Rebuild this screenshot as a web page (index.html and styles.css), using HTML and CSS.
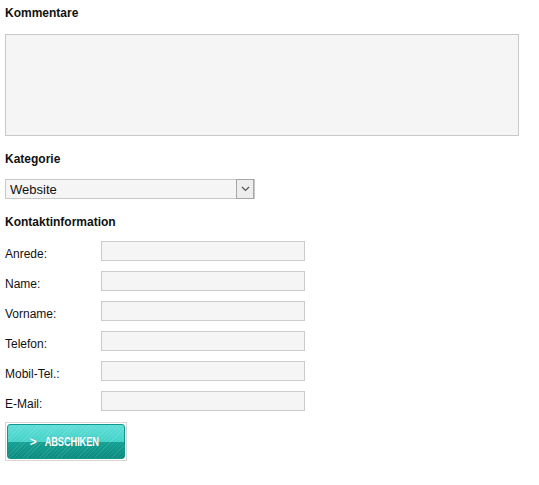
FILE: index.html
```html
<!DOCTYPE html>
<html lang="de">
<head>
  <meta charset="UTF-8">
  <title>Kontaktformular</title>
  <link rel="stylesheet" href="styles.css">
</head>
<body>

  <form class="contact-form">
    <h3>Kommentare</h3>
    <textarea class="comments"></textarea>

    <h3 class="section">Kategorie</h3>
    <div class="select-wrap">
      <select class="category">
        <option>Website</option>
        <option>Shop</option>
        <option>Sonstiges</option>
      </select>
      <span class="select-arrow">
        <svg width="9" height="6" viewBox="0 0 9 6"><path d="M1 1 L4.5 4.5 L8 1" fill="none" stroke="#555" stroke-width="1.2"/></svg>
      </span>
    </div>

    <h3 class="section">Kontaktinformation</h3>
    <div class="fields">
      <label>Anrede:</label><input type="text">
      <label>Name:</label><input type="text">
      <label>Vorname:</label><input type="text">
      <label>Telefon:</label><input type="text">
      <label>Mobil-Tel.:</label><input type="text">
      <label>E-Mail:</label><input type="text">
    </div>

    <div class="submit-box">
      <button type="submit"><span class="chev">&gt;</span><span class="label">ABSCHIKEN</span></button>
    </div>
  </form>

</body>
</html>
```

FILE: styles.css
```css
body {
  margin: 0;
  background: #fff;
  font-family: "Liberation Sans", Arial, sans-serif;
  font-size: 12px;
  color: #111;
}
.contact-form {
  padding: 6px 5px;
}
h3 {
  margin: 0;
  font-size: 12px;
  line-height: 14px;
  font-weight: bold;
  color: #111;
}
.section {
  margin-top: 16px;
}
.comments {
  display: block;
  box-sizing: border-box;
  width: 514px;
  height: 102px;
  margin: 14px 0 0;
  border: 1px solid #c9c9c9;
  background: #f5f5f5;
  resize: none;
  padding: 4px;
}
.select-wrap {
  position: relative;
  width: 250px;
  margin-top: 13px;
  margin-bottom: 14px;
}
.category {
  display: block;
  box-sizing: border-box;
  width: 250px;
  height: 20px;
  border: 1px solid #c9c9c9;
  background: #f5f5f5;
  font-family: "Liberation Sans", Arial, sans-serif;
  font-size: 13px;
  color: #111;
  padding: 0 4px;
  appearance: none;
  -webkit-appearance: none;
  border-radius: 0;
}
.select-arrow {
  position: absolute;
  right: 1px;
  top: 0;
  width: 16px;
  height: 18px;
  border: 1px solid #a6a6a6;
  background: #ededed;
  display: flex;
  align-items: center;
  justify-content: center;
  pointer-events: none;
}
.fields {
  display: grid;
  grid-template-columns: 96px 204px;
  row-gap: 10px;
  margin-top: 12px;
}
.fields label {
  line-height: 14px;
  padding-top: 6px;
  color: #111;
}
.fields input {
  box-sizing: border-box;
  height: 20px;
  width: 204px;
  margin: 0;
  border: 1px solid #cbcbcb;
  background: #f5f5f5;
}
.submit-box {
  display: inline-block;
  margin-top: 11px;
  padding: 1px;
  border: 1px solid #d6d6d6;
  background: #fff;
}
.submit-box button {
  display: flex;
  align-items: center;
  justify-content: center;
  width: 118px;
  height: 35px;
  border: 1px solid #12958a;
  border-radius: 3px;
  color: #fff;
  font-family: "Liberation Sans", Arial, sans-serif;
  font-size: 12px;
  font-weight: bold;
  padding: 0 0 0 4px;
  background:
    repeating-linear-gradient(135deg, rgba(255,255,255,0.10) 0 1px, rgba(255,255,255,0) 1px 3px),
    linear-gradient(to bottom, #5fded6 0%, #44d2c8 50%, #13a193 50%, #0b8b7e 100%);
  text-shadow: 0 0 1px rgba(0,0,0,0.2);
}
.chev {
  margin-right: 0;
}
.label {
  display: inline-block;
  transform: scaleX(0.78);
  letter-spacing: -0.2px;
}
```
